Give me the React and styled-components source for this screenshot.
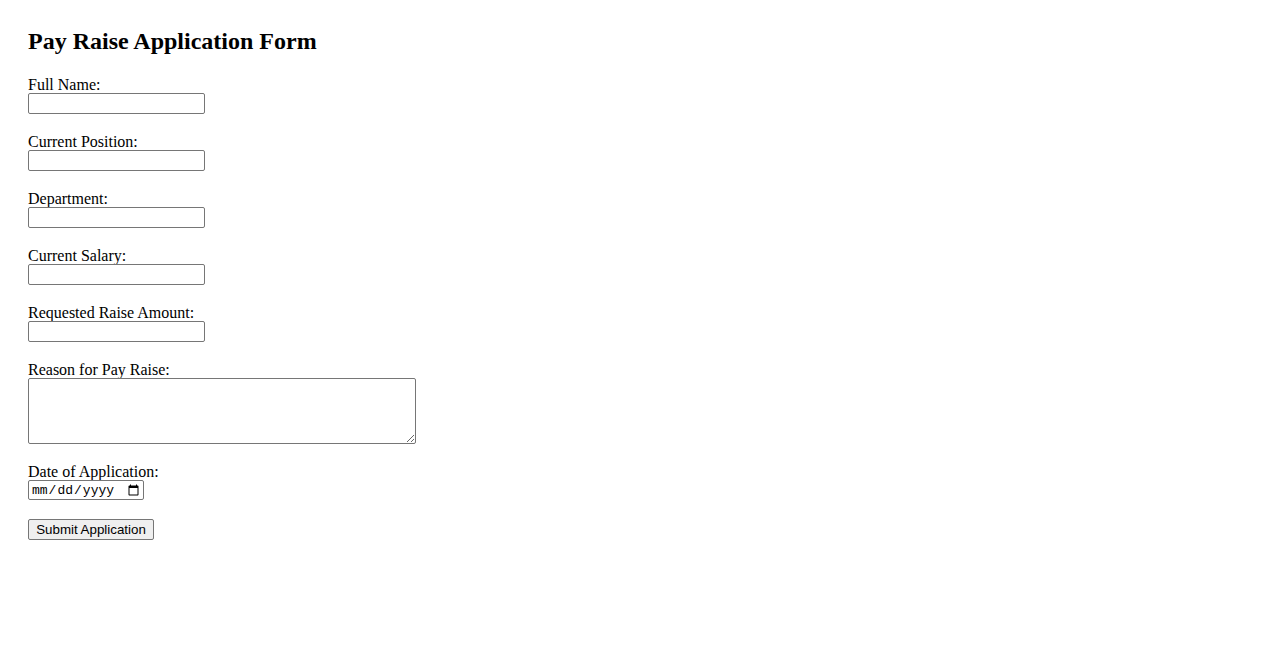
import React from "react";
import styled, { createGlobalStyle } from "styled-components";

const GlobalStyle = createGlobalStyle`
  html, body {
    margin: 0;
    padding: 0;
    background: #ffffff;
  }
  body {
    font-family: "Liberation Serif", "Times New Roman", serif;
    font-size: 16px;
    color: #000000;
  }
`;

const Page = styled.div`
  padding: 28px;
`;

const Title = styled.h2`
  margin: 0 0 21px;
  font-family: "Liberation Serif", "Times New Roman", serif;
  font-size: 24px;
  font-weight: bold;
  line-height: normal;
`;

const Form = styled.form`
  display: block;
`;

const Field = styled.div`
  display: flex;
  flex-direction: column;
  align-items: flex-start;
  margin-bottom: 19px;
`;

const Label = styled.label`
  display: block;
  font-family: "Liberation Serif", "Times New Roman", serif;
  font-size: 16px;
  line-height: 17px;
`;

const controlBase = `
  box-sizing: border-box;
  margin: 0;
  border: 1px solid #767676;
  border-radius: 2px;
  background: #ffffff;
  color: #000000;
`;

const TextInput = styled.input`
  ${controlBase}
  width: 177px;
  height: 21px;
  padding: 1px 2px;
  font-family: "Liberation Sans", Arial, sans-serif;
  font-size: 13.33px;
`;

const TextArea = styled.textarea`
  ${controlBase}
  width: 388px;
  height: 66px;
  padding: 2px;
  font-family: "Liberation Mono", monospace;
  font-size: 13.33px;
  resize: both;
`;

const DateInput = styled.input`
  ${controlBase}
  width: 116px;
  height: 20px;
  padding: 0 1px 0 2px;
  font-family: "Liberation Mono", monospace;
  font-size: 13px;
`;

const SubmitButton = styled.button`
  box-sizing: border-box;
  margin: 0;
  height: 21px;
  width: 126px;
  padding: 1px 6px;
  border: 1px solid #767676;
  border-radius: 2px;
  background: #efefef;
  color: #000000;
  font-family: "Liberation Sans", Arial, sans-serif;
  font-size: 13.33px;
  line-height: normal;
  cursor: default;
`;

const textFields = [
  { id: "fullName", label: "Full Name:" },
  { id: "position", label: "Current Position:" },
  { id: "department", label: "Department:" },
  { id: "salary", label: "Current Salary:" },
  { id: "raise", label: "Requested Raise Amount:" },
];

export default function App() {
  return (
    <>
      <GlobalStyle />
      <Page>
        <Title>Pay Raise Application Form</Title>
        <Form onSubmit={(e) => e.preventDefault()}>
          {textFields.map((f) => (
            <Field key={f.id}>
              <Label htmlFor={f.id}>{f.label}</Label>
              <TextInput id={f.id} name={f.id} type="text" />
            </Field>
          ))}
          <Field>
            <Label htmlFor="reason">Reason for Pay Raise:</Label>
            <TextArea id="reason" name="reason" />
          </Field>
          <Field>
            <Label htmlFor="date">Date of Application:</Label>
            <DateInput id="date" name="date" type="date" />
          </Field>
          <SubmitButton type="submit">Submit Application</SubmitButton>
        </Form>
      </Page>
    </>
  );
}
